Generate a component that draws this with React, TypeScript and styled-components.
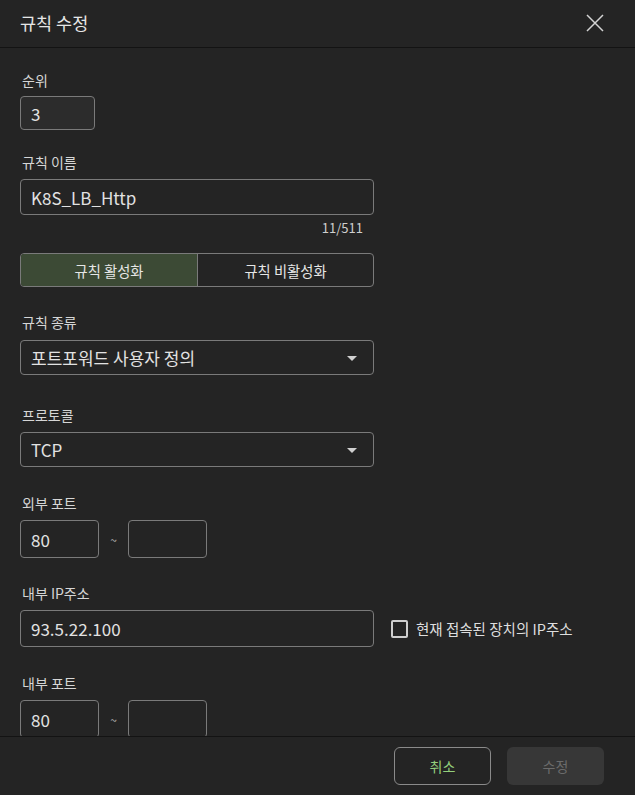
import React from "react";
import styled, { createGlobalStyle } from "styled-components";

const GlobalStyle = createGlobalStyle`
  html, body {
    margin: 0;
    padding: 0;
    background: #242424;
  }
  * { box-sizing: border-box; }
  body {
    font-family: "Noto Sans CJK KR", "Noto Sans", sans-serif;
    color: #dcdcdc;
  }
`;

const Modal = styled.div`
  width: 635px;
  height: 795px;
  display: flex;
  flex-direction: column;
  background: #242424;
  overflow: hidden;
`;

const Header = styled.div`
  height: 48px;
  flex: none;
  display: flex;
  align-items: center;
  justify-content: space-between;
  padding: 0 30px 2px 20px;
  border-bottom: 1px solid #131313;
`;

const Title = styled.h1`
  margin: 0;
  font-size: 17.5px;
  font-weight: 400;
  color: #e6e6e6;
  letter-spacing: 0;
`;

const CloseButton = styled.button`
  width: 20px;
  height: 20px;
  padding: 0;
  border: none;
  background: none;
  display: flex;
  align-items: center;
  justify-content: center;
  color: #d4d4d4;
`;

const Body = styled.div`
  flex: 1;
  min-height: 0;
  overflow: hidden;
  padding: 22px 20px 0 20px;
  display: flex;
  flex-direction: column;
`;

const Field = styled.div<{ $mt?: number }>`
  flex: none;
  display: flex;
  flex-direction: column;
  margin-top: ${(p) => p.$mt ?? 0}px;
`;

const Label = styled.label<{ $gap?: number }>`
  font-size: 14px;
  line-height: 20px;
  padding-left: 2px;
  color: #d6d6d6;
  margin-bottom: ${(p) => p.$gap ?? 7}px;
`;

const Input = styled.div<{ $w?: number; $h?: number; $muted?: boolean }>`
  width: ${(p) => p.$w ?? 354}px;
  height: ${(p) => p.$h ?? 36}px;
  border: 1px solid #7a7a7a;
  border-radius: 4px;
  background: ${(p) => (p.$muted ? "#2c2c2c" : "#242424")};
  padding: 0 10px;
  display: flex;
  align-items: center;
  font-size: 17px;
  color: #e2e2e2;
  flex: none;
`;

const Counter = styled.div`
  width: 354px;
  text-align: right;
  padding-right: 11px;
  font-size: 13px;
  line-height: 16px;
  margin-top: 5px;
  color: #cfcfcf;
`;

const Toggle = styled.div`
  flex: none;
  width: 354px;
  height: 34px;
  margin-top: 17px;
  border: 1px solid #7a7a7a;
  border-radius: 4px;
  display: grid;
  grid-template-columns: 1fr 1fr;
  overflow: hidden;
`;

const ToggleOption = styled.div<{ $active?: boolean }>`
  display: flex;
  align-items: center;
  justify-content: center;
  font-size: 14.3px;
  color: #e6e6e6;
  background: ${(p) => (p.$active ? "#3c4a35" : "transparent")};
  & + & {
    border-left: 1px solid #7a7a7a;
  }
`;

const Select = styled(Input)`
  justify-content: space-between;
  padding-right: 16px;
`;

const Caret = styled.span`
  width: 0;
  height: 0;
  border-left: 5px solid transparent;
  border-right: 5px solid transparent;
  border-top: 5px solid #d0d0d0;
  margin-top: 2px;
`;

const Row = styled.div`
  display: flex;
  align-items: center;
`;

const Tilde = styled.span`
  width: 29px;
  text-align: center;
  font-size: 12px;
  color: #b0b0b0;
`;

const CheckLabel = styled.label`
  display: flex;
  align-items: center;
  margin-left: 17px;
  font-size: 14.5px;
  color: #dedede;
  gap: 8px;
`;

const CheckBox = styled.span`
  width: 17px;
  height: 18px;
  border: 2px solid #cfcfcf;
  border-radius: 2px;
`;

const Footer = styled.div`
  height: 59px;
  flex: none;
  border-top: 1px solid #131313;
  display: flex;
  justify-content: flex-end;
  align-items: center;
  gap: 16px;
  padding: 0 31px 0 0;
`;

const Button = styled.button<{ $variant: "outline" | "disabled" }>`
  width: 97px;
  height: 38px;
  border-radius: 6px;
  font-family: "Noto Sans CJK KR", "Noto Sans", sans-serif;
  font-size: 14px;
  border: ${(p) => (p.$variant === "outline" ? "1px solid #8a8a8a" : "none")};
  background: ${(p) => (p.$variant === "outline" ? "transparent" : "#373737")};
  color: ${(p) => (p.$variant === "outline" ? "#93cf7c" : "#6b6b6b")};
`;

export default function App() {
  return (
    <>
      <GlobalStyle />
      <Modal>
        <Header>
          <Title>규칙 수정</Title>
          <CloseButton aria-label="닫기">
            <svg width="18" height="18" viewBox="0 0 18 18">
              <path d="M1 1 L17 17 M17 1 L1 17" stroke="currentColor" strokeWidth="1.5" fill="none" />
            </svg>
          </CloseButton>
        </Header>
        <Body>
          <Field>
            <Label $gap={6}>순위</Label>
            <Input $w={75} $h={34} $muted>3</Input>
          </Field>
          <Field $mt={22}>
            <Label>규칙 이름</Label>
            <Input>K8S_LB_Http</Input>
            <Counter>11/511</Counter>
          </Field>
          <Toggle>
            <ToggleOption $active>규칙 활성화</ToggleOption>
            <ToggleOption>규칙 비활성화</ToggleOption>
          </Toggle>
          <Field $mt={25}>
            <Label $gap={8}>규칙 종류</Label>
            <Select $h={35}>
              포트포워드 사용자 정의
              <Caret />
            </Select>
          </Field>
          <Field $mt={30}>
            <Label $gap={7}>프로토콜</Label>
            <Select $h={35}>
              TCP
              <Caret />
            </Select>
          </Field>
          <Field $mt={26}>
            <Label $gap={7}>외부 포트</Label>
            <Row>
              <Input $w={79} $h={38}>80</Input>
              <Tilde>~</Tilde>
              <Input $w={79} $h={38} />
            </Row>
          </Field>
          <Field $mt={25}>
            <Label $gap={7}>내부 IP주소</Label>
            <Row>
              <Input $h={37}>93.5.22.100</Input>
              <CheckLabel>
                <CheckBox />
                현재 접속된 장치의 IP주소
              </CheckLabel>
            </Row>
          </Field>
          <Field $mt={26}>
            <Label $gap={7}>내부 포트</Label>
            <Row>
              <Input $w={79} $h={38}>80</Input>
              <Tilde>~</Tilde>
              <Input $w={79} $h={38} />
            </Row>
          </Field>
        </Body>
        <Footer>
          <Button $variant="outline">취소</Button>
          <Button $variant="disabled" disabled>
            수정
          </Button>
        </Footer>
      </Modal>
    </>
  );
}
